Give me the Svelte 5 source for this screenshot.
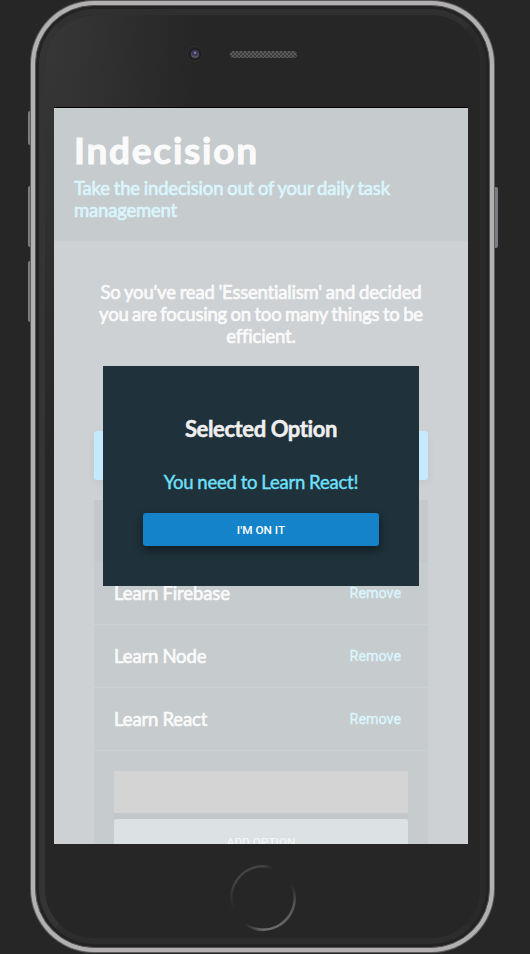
<script>
  const options = ['Learn Firebase', 'Learn Node', 'Learn React'];
</script>

<div class="stage">
  <div class="key left mute"></div>
  <div class="key left up"></div>
  <div class="key left down"></div>
  <div class="key right power"></div>
  <div class="edge">
    <div class="rim">
      <div class="seam">
        <div class="bezel">
          <div class="top">
            <span class="camera"><i></i></span>
            <span class="speaker"></span>
          </div>
          <main class="screen">
            <header>
              <h1>Indecision</h1>
              <h2>Take the indecision out of your daily task<br />management</h2>
            </header>
            <section class="body">
              <p class="intro">
                <span class="l1">So you've read 'Essentialism' and decided</span>
                <span class="l2">you are focusing on too many things to be</span>
                <span class="l3">efficient.</span>
              </p>
              <div class="big"></div>
              <div class="widget">
                <div class="widget-head"></div>
                {#each options as option}
                  <div class="option">
                    <span class="name">{option}</span>
                    <button class="link">Remove</button>
                  </div>
                {/each}
                <form class="add">
                  <div class="field"></div>
                  <button type="button" class="add-button">ADD OPTION</button>
                </form>
              </div>
            </section>
            <div class="modal">
              <h3>Selected Option</h3>
              <p>You need to Learn React!</p>
              <button type="button">I'M ON IT</button>
            </div>
          </main>
          <div class="bottom">
            <svg class="home" width="68" height="68" viewBox="0 0 68 68" fill="none">
              <defs>
                <linearGradient id="arcA" x1="30" y1="0" x2="6" y2="46" gradientUnits="userSpaceOnUse">
                  <stop offset="0" stop-color="#444" />
                  <stop offset=".55" stop-color="#424242" />
                  <stop offset="1" stop-color="#272727" />
                </linearGradient>
                <linearGradient id="arcB" x1="62" y1="20" x2="34" y2="66" gradientUnits="userSpaceOnUse">
                  <stop offset="0" stop-color="#272727" />
                  <stop offset=".3" stop-color="#555" />
                  <stop offset="1" stop-color="#707070" />
                </linearGradient>
                <linearGradient id="arcC" x1="35" y1="0" x2="16" y2="0" gradientUnits="userSpaceOnUse">
                  <stop offset="0" stop-color="#6e6e6e" />
                  <stop offset="1" stop-color="#272727" />
                </linearGradient>
                <linearGradient id="arcD" x1="34" y1="0" x2="44" y2="0" gradientUnits="userSpaceOnUse">
                  <stop offset="0" stop-color="#444" />
                  <stop offset="1" stop-color="#272727" />
                </linearGradient>
              </defs>
              <g stroke-width="2.5">
                <path d="M34 2.3A31.7 31.7 0 0 0 4.5 45.5" stroke="url(#arcA)" />
                <path d="M34 2.3A31.7 31.7 0 0 1 44 4" stroke="url(#arcD)" />
                <path d="M62.5 20A31.7 31.7 0 0 1 34 65.7" stroke="url(#arcB)" />
                <path d="M34.2 65.7A31.7 31.7 0 0 1 16 60" stroke="url(#arcC)" />
              </g>
            </svg>
          </div>
        </div>
      </div>
    </div>
  </div>
</div>

<style>
  :global(body) {
    background: #262626;
    overflow: hidden;
  }
  * {
    box-sizing: border-box;
    margin: 0;
  }
  button {
    font: inherit;
    border: 0;
    padding: 0;
  }
  .stage {
    position: relative;
    width: 530px;
    height: 954px;
    padding-left: 30px;
    background: #262626;
    font-family: Lato, sans-serif;
  }
  .key {
    position: absolute;
    width: 4px;
    background: #7b7b80;
  }
  .left {
    left: 28px;
    border-radius: 2px 0 0 2px;
  }
  .right {
    left: 494px;
    border-radius: 0 2px 2px 0;
  }
  .mute { top: 111px; height: 34px; }
  .up { top: 186px; height: 61px; }
  .down { top: 261px; height: 61px; }
  .power { top: 187px; height: 61px; }

  .edge {
    position: relative;
    width: 465px;
    height: 953px;
    padding: 1px;
    border-radius: 64px;
    background: #5e5c5e;
  }
  .rim {
    height: 100%;
    padding: 4px;
    border-radius: 63px;
    background: #b2b0b1;
  }
  .seam {
    height: 100%;
    padding: 3px;
    border: 1px solid #555;
    border-radius: 59px;
    background: #232323;
  }
  .bezel {
    display: flex;
    flex-direction: column;
    height: 100%;
    padding-left: 9px;
    border: 6px solid #2d2d2d;
    border-color: #303030 #2a2a2a #2d2d2d #343434;
    border-radius: 55px;
    background: radial-gradient(ellipse 150px 420px at 0 20px, #373737, #262626);
    background-clip: padding-box;
    background-color: #262626;
  }
  .top {
    display: flex;
    width: 414px;
    height: 93px;
    flex: none;
    padding: 31px 0 0 133px;
    border-bottom: 1px solid #000;
  }
  .camera {
    display: grid;
    place-items: center;
    width: 16px;
    height: 16px;
    border-radius: 50%;
    background: #202020;
    border: 1px solid #303030;
  }
  .camera i {
    width: 8px;
    height: 8px;
    border-radius: 50%;
    background: radial-gradient(circle at 50% 35%, #8a8390 0 .6px, #41395a 1.6px, #3d3457 3px, #5c5563 4px);
  }
  .speaker {
    width: 67px;
    height: 7px;
    margin: 5px 0 0 27px;
    border-radius: 4px;
    background: repeating-conic-gradient(#5c5c5c 0 25%, #3b3b3b 0 50%) 0 0 / 4px 4px;
  }
  .screen {
    position: relative;
    flex: none;
    width: 414px;
    height: 736px;
    overflow: hidden;
    background: #cdd1d4;
    color: #fafafa;
  }
  header {
    height: 133px;
    padding: 19px 20px 0;
    background: #c6cbce;
  }
  h1 {
    font-size: 37px;
    line-height: 45px;
    font-weight: 700;
    letter-spacing: 1.75px;
    -webkit-text-stroke: 1px;
  }
  h2, .intro, .name, .modal p {
    font-size: 18.5px;
    line-height: 22px;
    font-weight: 400;
    -webkit-text-stroke: 0.65px;
    letter-spacing: -0.2px;
    word-spacing: -0.6px;
    white-space: nowrap;
  }
  h2 {
    margin-top: 5px;
    color: #daf6fd;
  }
  .name {
    letter-spacing: -0.1px;
  }
  .body {
    padding: 40px 40px 0;
  }
  .intro {
    display: flex;
    flex-direction: column;
    align-items: center;
  }
  .l2 {
    word-spacing: -1px;
  }
  .big {
    height: 49px;
    margin-top: 84px;
    border-radius: 3px;
    background: #c5e9fd;
    box-shadow: 0 4px 10px #0000000c;
  }
  .widget {
    margin-top: 20px;
    background: #c6cbcd;
  }
  .widget-head {
    height: 62px;
    background: #c4c8ca;
  }
  .option {
    display: flex;
    align-items: center;
    justify-content: space-between;
    height: 63px;
    padding: 0 27px 0 20px;
    border-bottom: 1px solid #cfd1d1;
  }
  .link {
    background: none;
    color: #daf6fd;
    font-family: Roboto, sans-serif;
    font-size: 14.3px;
    font-weight: 400;
    -webkit-text-stroke: 0.35px;
  }
  .add {
    padding: 20px;
  }
  .field {
    height: 42px;
    background: #d4d4d4;
    box-shadow: 0 6px #c3c7ca;
  }
  .add-button {
    width: 100%;
    height: 45px;
    margin-top: 6px;
    border-radius: 3px;
    background: #dce1e3;
    color: #f2f4f5;
    font-family: Roboto, sans-serif;
    font-size: 11.8px;
    font-weight: 500;
  }
  .modal {
    position: absolute;
    left: 49px;
    top: 258px;
    width: 316px;
    height: 220px;
    padding: 50px 40px 0;
    background: #1f313a;
    text-align: center;
  }
  .modal h3 {
    color: #f0eff0;
    font-size: 22px;
    line-height: 26px;
    font-weight: 700;
    letter-spacing: -0.4px;
    -webkit-text-stroke: 0.5px;
  }
  .modal p {
    margin-top: 29px;
    color: #6fe0fc;
    -webkit-text-stroke: 0.4px;
  }
  .modal button {
    width: 236px;
    height: 33px;
    margin-top: 20px;
    border-radius: 3px;
    background: #1583c9;
    color: #fff;
    font-family: Roboto, sans-serif;
    font-size: 11.8px;
    font-weight: 500;
    box-shadow: 0 4px 8px #0007;
  }
  .bottom {
    width: 414px;
    padding: 20px 0 0 175px;
  }
  .home {
    display: block;
  }
</style>
